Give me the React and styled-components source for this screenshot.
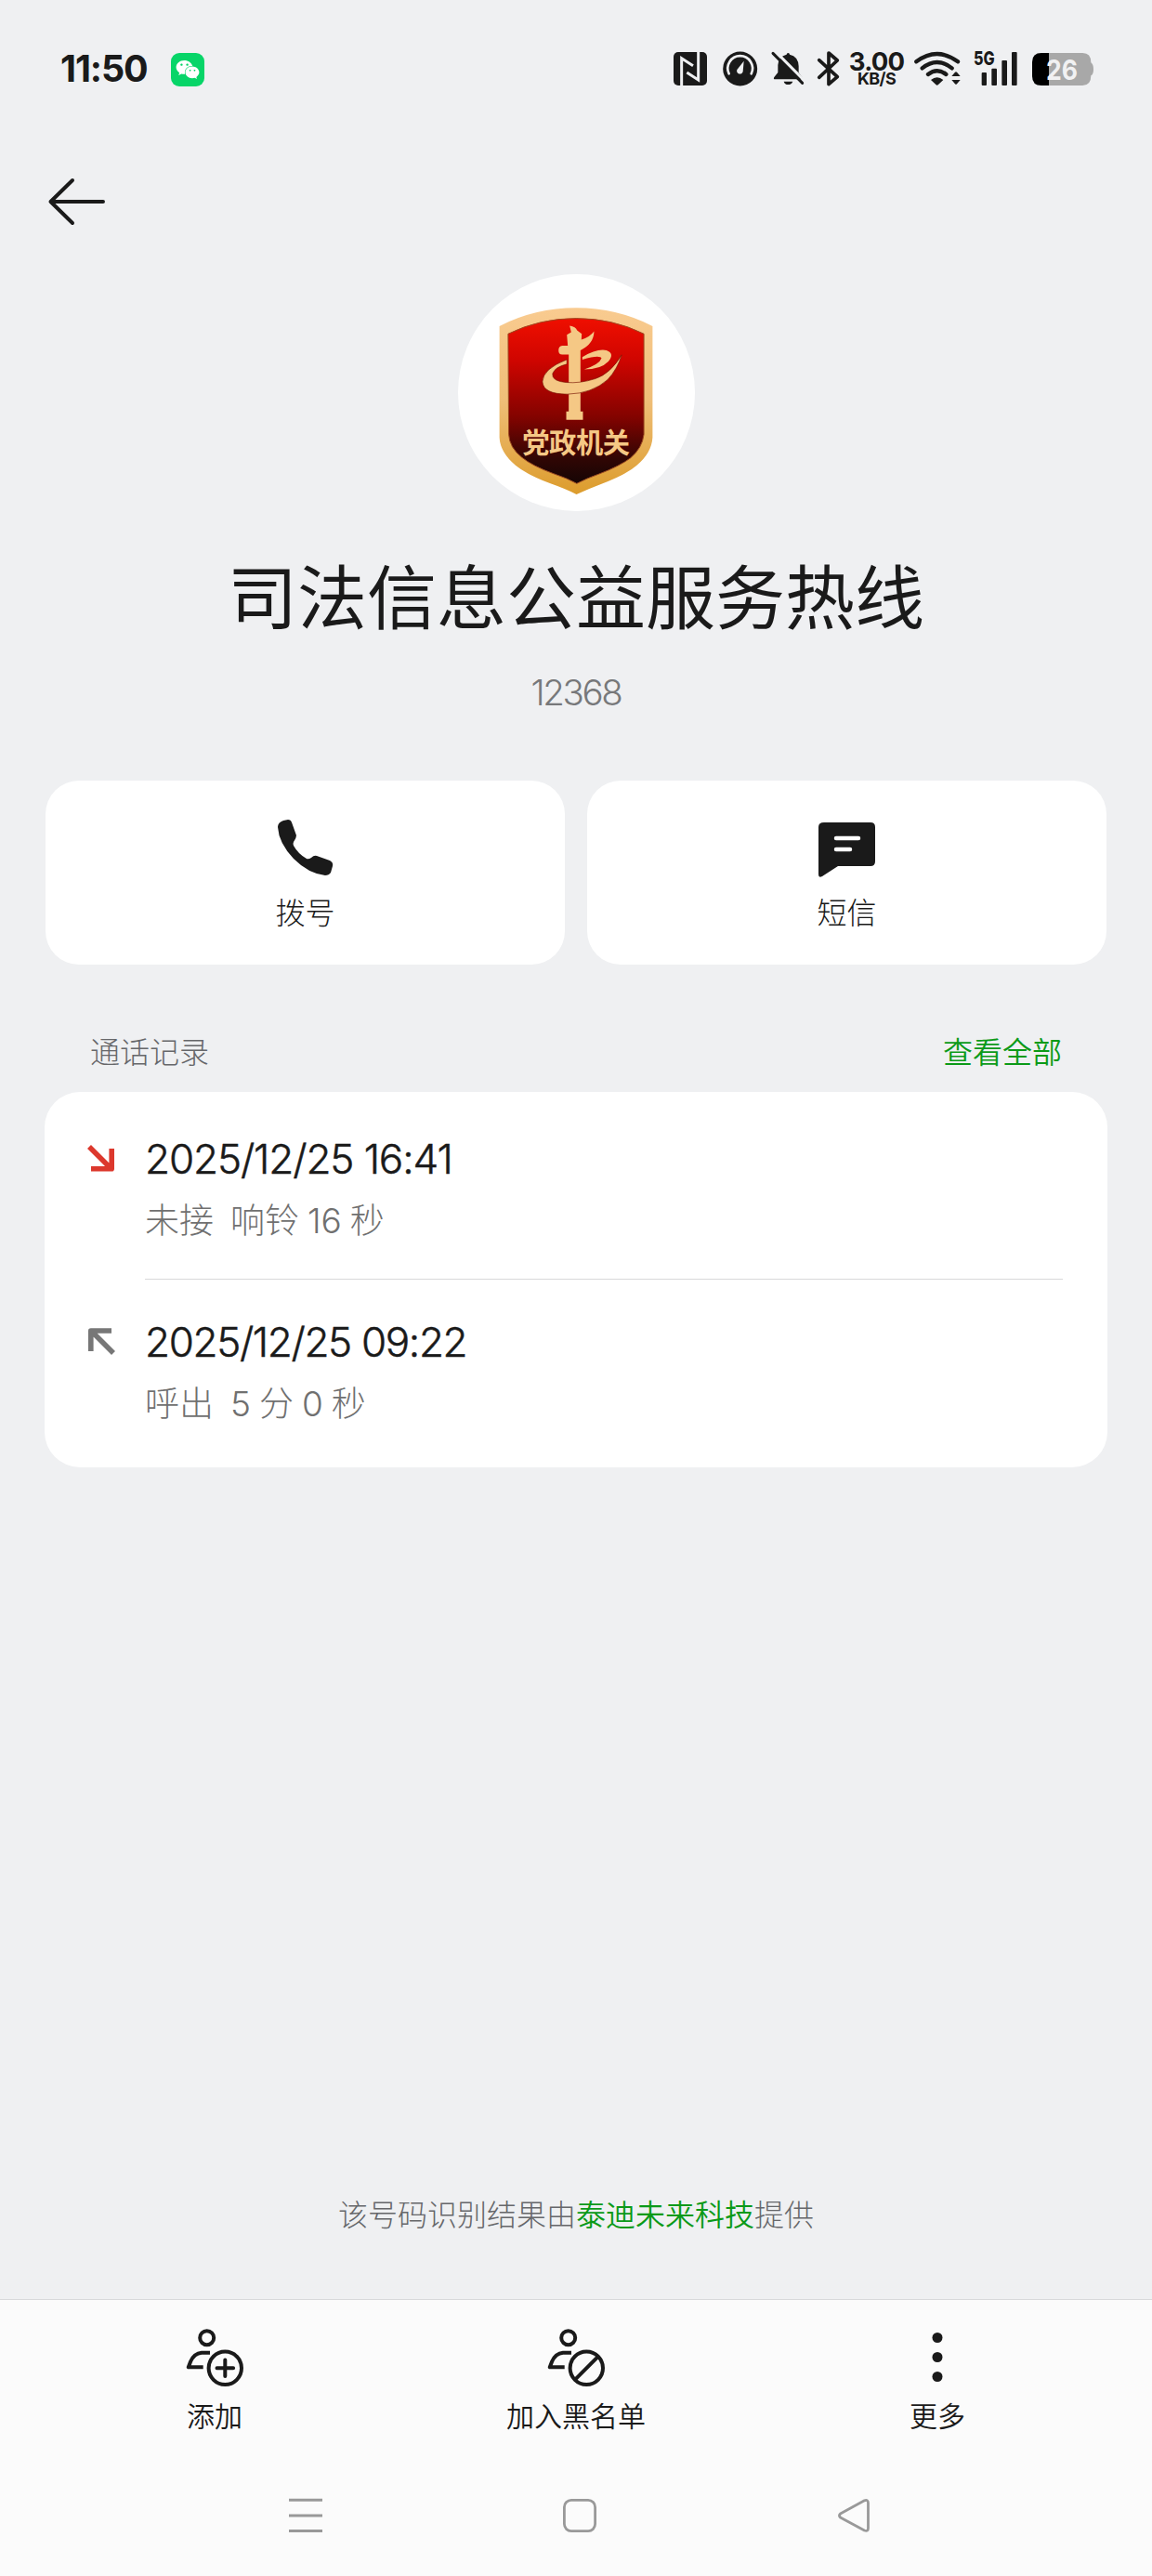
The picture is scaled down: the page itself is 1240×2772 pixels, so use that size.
import React from "react";
import styled, { createGlobalStyle } from "styled-components";
import { FaWeixin } from "react-icons/fa";

const INK = "#1a1a1a";
const PAPER = "#eff0f2";
const GOLD = "#f5c885";

const logs = [
  { missed: true, date: "2025/12/25 16:41", detail: "未接  响铃 16 秒", spacing: "-1.1px" },
  { missed: false, date: "2025/12/25 09:22", detail: "呼出  5 分 0 秒", spacing: "-1.35px" },
];

// 状态栏
const StatusIcon = ({ x, width, children }) => (
  <StatusSvg width={width} height="38" viewBox={`${x} 75 ${width * 3} 114`}>
    {children}
  </StatusSvg>
);

const StatusBar = () => (
  <StatusWrap>
    <Clock>11:50</Clock>
    <WeChat>
      <FaWeixin />
    </WeChat>
    <StatusRight>
      <StatusIcon x={72} width={39}>
        <rect x="75" y="78" width="108" height="108" rx="15" fill={INK} />
        <path d="M101 188V98L138 122M155 76V168L118 144" stroke={PAPER} strokeWidth="9" fill="none" />
      </StatusIcon>
      <StatusIcon x={231} width={39}>
        <circle cx="290" cy="132" r="55.5" fill={INK} />
        <path d="M254 148A40 40 0 1 1 326 148" stroke={PAPER} strokeWidth="8" fill="none" strokeLinecap="round" />
        <path d="M302 107L299 141A10 10 0 1 1 280 135Z" fill={PAPER} />
      </StatusIcon>
      <StatusIcon x={390} width={36}>
        <path
          d="M440 86Q440 81 445 81Q450 81 450 86Q478 92 479 124V144L491 160Q494 166 487 166H403Q396 166 400 159L412 144V120Q414 92 440 86ZM431 173H460Q456 183 445 183Q434 183 431 173Z"
          fill={INK}
        />
        <path d="M404 76L500 173" stroke={PAPER} strokeWidth="9" />
        <path d="M396 82L491 178" stroke={INK} strokeWidth="9" strokeLinecap="round" />
      </StatusIcon>
      <StatusIcon x={540} width={22}>
        <path
          d="M545 104L604 158L576 182V81L604 105L545 160"
          stroke={INK}
          strokeWidth="11"
          fill="none"
          strokeLinejoin="round"
          strokeLinecap="round"
        />
      </StatusIcon>
      <NetSpeed>
        <NetValue>3.00</NetValue>
        <NetUnit>KB/S</NetUnit>
      </NetSpeed>
      <StatusIcon x={855} width={49}>
        <g stroke={INK} strokeWidth="13" fill="none" strokeLinecap="round">
          <path d="M859 109Q926 59 993 109" />
          <path d="M878 130Q926 92 974 130" />
          <path d="M897 150Q926 127 955 150" />
        </g>
        <path d="M906 168Q926 151 946 168L930 183Q926 187 922 183Z" fill={INK} />
        <path d="M973 156L984 143Q987 140 990 143L1001 156ZM973 168H1001L990 181Q987 184 984 181Z" fill={INK} />
      </StatusIcon>
      <StatusIcon x={1044} width={48}>
        <text x="1044" y="121" fontSize="62" fontWeight="800" fill={INK} textLength="68" lengthAdjust="spacingAndGlyphs">
          5G
        </text>
        <rect x="1070" y="144" width="16" height="42" rx="3" fill={INK} />
        <rect x="1102" y="131" width="17" height="55" rx="3" fill={INK} />
        <rect x="1135" y="105" width="17" height="81" rx="3" fill={INK} />
        <rect x="1167" y="78" width="17" height="108" rx="3" fill={INK} />
      </StatusIcon>
      <StatusIcon x={1230} width={67}>
        <path
          d="M1287 81H1396Q1423 81 1423 112Q1431 118 1431 134Q1431 150 1423 154Q1423 186 1396 186H1287Z"
          fill="#a8a8a8"
        />
        <path d="M1287 81H1263Q1233 81 1233 110V156Q1233 186 1263 186H1287Z" fill="#000" />
        <text x="1278" y="167" fontSize="90" fontWeight="700" fill="#f1f1f2" textLength="102" lengthAdjust="spacingAndGlyphs">
          26
        </text>
      </StatusIcon>
    </StatusRight>
  </StatusWrap>
);

// 党政机关徽标
const Emblem = () => (
  <svg width="255" height="255" viewBox="36 44 766 766">
    <defs>
      <linearGradient id="gold" x1="0" y1="0" x2="0" y2="1">
        <stop offset="0" stopColor="#f9cb90" />
        <stop offset="0.5" stopColor="#efbe77" />
        <stop offset="1" stopColor="#dc9c2c" />
      </linearGradient>
      <linearGradient id="red" x1="0" y1="0" x2="0" y2="1">
        <stop offset="0" stopColor="#ef0f00" />
        <stop offset="0.25" stopColor="#d00500" />
        <stop offset="0.6" stopColor="#820300" />
        <stop offset="0.85" stopColor="#300604" />
        <stop offset="1" stopColor="#150505" />
      </linearGradient>
    </defs>
    <path
      d="M170 212Q285 153 418 153Q550 153 665 212V572Q662 622 614 662Q580 692 500 722Q455 739 419 756Q383 738 335 721Q258 692 222 662Q172 620 170 572Z"
      fill="url(#gold)"
    />
    <path
      d="M198 237Q300 187 418 187Q536 187 637 237V562Q632 606 594 638Q560 664 492 690Q450 705 420 721Q390 704 345 689Q276 664 242 636Q202 604 200 562Z"
      fill="url(#red)"
      stroke="#9c4a22"
      strokeWidth="3"
    />
    <g fill={GOLD}>
      <path d="M438 312Q484 284 516 290Q544 300 522 326Q497 352 444 352Q494 335 500 316Q496 303 438 320Z" />
      <path d="M394 488V304H373Q361 304 361 290Q361 276 373 275H391L388 240L402 232L397 211Q417 214 421 226L436 237L435 256Q462 248 476 229Q475 270 432 290V488H440V515H386V488Z" />
      <path
        d="M388 320Q310 350 309 392Q312 432 390 432Q470 430 520 385Q552 350 565 305Q530 365 480 382Q430 398 385 394Q338 390 342 365Q350 344 388 335Z"
        stroke="#7a1a08"
        strokeWidth="2"
      />
      <EmblemText x="244" y="622" textLength="348">
        党政机关
      </EmblemText>
    </g>
  </svg>
);

const PhoneIcon = () => (
  <svg width="60" height="60" viewBox="0 0 60 60">
    <path
      d="M0 8Q0 3 6 1L11 0Q14 0 15 3L20 17Q20 20 17 24Q16 26 17 28Q22 37 31 42Q33 43 36 41Q39 38 42 39L56 44Q60 46 59 50L57 57Q55 60 51 60Q33 58 17 42Q1 25 0 8Z"
      fill={INK}
    />
  </svg>
);

const MessageIcon = () => (
  <svg width="62" height="60" viewBox="0 0 62 60">
    <path d="M6 3H56Q61 3 61 8V45Q61 50 56 50H21L4 61Q0 63 0 59V8Q0 3 6 3Z" fill={INK} />
    <path d="M19 20H43M19 32H34" stroke="#fff" strokeWidth="4.5" strokeLinecap="round" />
  </svg>
);

const MissedIcon = () => (
  <LogSvg width="30" height="30" viewBox="0 0 30 30">
    <path d="M2 2L25 25M4 25.7H26.2V4" stroke="#dc382d" strokeWidth="5.6" fill="none" strokeLinejoin="round" />
  </LogSvg>
);

const OutgoingIcon = () => (
  <LogSvg width="30" height="30" viewBox="0 0 30 30">
    <path d="M28 27L5 4M3.8 25V3H26" stroke="#777" strokeWidth="5.6" fill="none" strokeLinejoin="round" />
  </LogSvg>
);

const Person = ({ children }) => (
  <svg width="62" height="62" viewBox="0 0 62 62" fill="none" stroke={INK} strokeWidth="4">
    <circle cx="22.7" cy="9.7" r="7.5" />
    <path d="M26 25.7H17Q9 26.5 5.2 35L2.8 41.3H18.7" strokeLinejoin="round" />
    <circle cx="42.3" cy="42.3" r="17.7" />
    {children}
  </svg>
);

const App = () => {
  return (
    <Screen>
      <GlobalStyle />
      <StatusBar />
      <Header>
        <svg width="62" height="50" viewBox="0 0 62 50">
          <path
            d="M26 2L2.5 25L26 48M2.5 25H59"
            stroke={INK}
            strokeWidth="4"
            fill="none"
            strokeLinecap="round"
            strokeLinejoin="round"
          />
        </svg>
      </Header>
      <Avatar>
        <Emblem />
      </Avatar>
      <Name>司法信息公益服务热线</Name>
      <PhoneNumber>12368</PhoneNumber>
      <Actions>
        <ActionCard>
          <PhoneIcon />
          <ActionLabel>拨号</ActionLabel>
        </ActionCard>
        <ActionCard>
          <MessageIcon />
          <ActionLabel>短信</ActionLabel>
        </ActionCard>
      </Actions>
      <LogHeader>
        <LogTitle>通话记录</LogTitle>
        <ViewAll>查看全部</ViewAll>
      </LogHeader>
      <LogCard>
        {logs.map(log => (
          <LogRow key={log.date}>
            {log.missed ? <MissedIcon /> : <OutgoingIcon />}
            <LogBody>
              <LogDate $spacing={log.spacing}>{log.date}</LogDate>
              <LogDetail>{log.detail}</LogDetail>
            </LogBody>
          </LogRow>
        ))}
      </LogCard>
      <Provider>
        该号码识别结果由<ProviderName>泰迪未来科技</ProviderName>提供
      </Provider>
      <BottomBar>
        <Tools>
          <Tool>
            <Person>
              <path d="M42.3 33.5V51.1M33.5 42.3H51.1" strokeLinecap="round" />
            </Person>
            <ToolLabel>添加</ToolLabel>
          </Tool>
          <Tool>
            <Person>
              <path d="M54.8 29.8L29.8 54.8" />
            </Person>
            <ToolLabel>加入黑名单</ToolLabel>
          </Tool>
          <Tool>
            <svg width="12" height="62" viewBox="0 0 12 62" fill={INK}>
              <circle cx="6" cy="9.5" r="5.5" />
              <circle cx="6" cy="30.5" r="5.5" />
              <circle cx="6" cy="51.5" r="5.5" />
            </svg>
            <ToolLabel>更多</ToolLabel>
          </Tool>
        </Tools>
        <SystemNav>
          <svg width="36" height="40" viewBox="0 0 36 40">
            <path d="M0 4.3H36M0 21H36M0 37.5H36" stroke="#999" strokeWidth="3" />
          </svg>
          <svg width="36" height="40" viewBox="0 0 36 40">
            <rect x="1.4" y="4.4" width="33.2" height="33.2" rx="7.5" stroke="#999" strokeWidth="2.8" fill="none" />
          </svg>
          <svg width="36" height="40" viewBox="0 0 36 40">
            <path
              d="M3.5 19L29.5 4.8Q33.5 3.5 33.5 7.5V34.5Q33.5 38.5 29.5 37L3.5 23Q1.5 21 3.5 19Z"
              stroke="#999"
              strokeWidth="2.8"
              fill="none"
              strokeLinejoin="round"
            />
          </svg>
        </SystemNav>
      </BottomBar>
    </Screen>
  );
};

const GlobalStyle = createGlobalStyle`
  body {
    margin: 0;
    background: ${PAPER};
  }
  svg {
    display: block;
    flex-shrink: 0;
    overflow: visible;
  }
`;

const Screen = styled.div`
  display: flex;
  flex-direction: column;
  width: 1240px;
  height: 2772px;
  box-sizing: border-box;
  background: ${PAPER};
  color: ${INK};
  font-family: Inter, "Noto Sans CJK SC", sans-serif;
`;
const StatusWrap = styled.div`
  display: flex;
  align-items: center;
  height: 149px;
  padding: 0 63px 0 65px;
`;
const Clock = styled.div`
  width: 119px;
  font-size: 39.5px;
  line-height: 44px;
  margin-top: -2px;
  font-weight: 700;
  letter-spacing: -1.1px;
`;
const WeChat = styled.div`
  display: flex;
  align-items: center;
  justify-content: center;
  width: 36px;
  height: 36px;
  border-radius: 9px;
  background: #07d568;
  color: #fff;
  font-size: 26px;
`;
const StatusRight = styled.div`
  display: flex;
  align-items: center;
  gap: 14px;
  margin-left: auto;
`;
const StatusSvg = styled.svg`
  position: relative;
  margin-top: -1px;
`;
const NetSpeed = styled.div`
  display: flex;
  flex-direction: column;
  align-items: center;
  width: 55px;
  font-weight: 700;
  white-space: nowrap;
`;
const NetValue = styled.div`
  font-size: 27.5px;
  line-height: 20px;
  letter-spacing: -0.8px;
`;
const NetUnit = styled.div`
  font-size: 18px;
  line-height: 17px;
  letter-spacing: -0.6px;
`;
const Header = styled.div`
  display: flex;
  align-items: center;
  height: 135px;
  padding-left: 52px;
`;
const Avatar = styled.div`
  align-self: center;
  width: 255px;
  height: 255px;
  margin-top: 11px;
  border-radius: 50%;
  background: #fff;
  overflow: hidden;
`;
const EmblemText = styled.text`
  font-size: 88px;
  font-weight: 700;
`;
const Name = styled.div`
  margin-top: 49px;
  font-size: 75px;
  line-height: 90px;
  text-align: center;
  font-weight: 400;
`;
const PhoneNumber = styled.div`
  margin-top: 34px;
  font-size: 38.5px;
  line-height: 44px;
  letter-spacing: -2.4px;
  text-align: center;
  font-weight: 300;
  color: #77787a;
`;
const Actions = styled.div`
  display: flex;
  gap: 24px;
  margin: 73px 49px 0;
`;
const ActionCard = styled.div`
  flex: 1;
  display: flex;
  flex-direction: column;
  align-items: center;
  height: 198px;
  padding-top: 42px;
  box-sizing: border-box;
  border-radius: 36px;
  background: #fff;
`;
const ActionLabel = styled.div`
  margin-top: 21px;
  font-size: 32px;
  line-height: 40px;
  font-weight: 300;
`;
const LogHeader = styled.div`
  display: flex;
  justify-content: space-between;
  margin: 73px 97px 0;
  font-size: 32px;
  line-height: 44px;
`;
const LogTitle = styled.div`
  font-weight: 300;
  color: #66676a;
`;
const ViewAll = styled.div`
  color: #0b9a18;
  font-weight: 350;
`;
const LogCard = styled.div`
  margin: 20px 48px 0;
  padding: 5px 0;
  border-radius: 38px;
  background: #fff;
`;
const LogRow = styled.div`
  display: flex;
  padding: 0 48px 0 46px;
`;
const LogSvg = styled.svg`
  margin: 52px 32px 0 0;
`;
const LogBody = styled.div`
  flex: 1;
  padding: 39px 0 37px;
  ${LogRow}:not(:last-child) & {
    border-bottom: 1px solid #d9d9da;
  }
  ${LogRow}:last-child & {
    padding-bottom: 38px;
  }
`;
const LogDate = styled.div`
  font-size: 44px;
  line-height: 56px;
  font-weight: 300;
  -webkit-text-stroke: 0.5px ${INK};
  letter-spacing: ${props => props.$spacing};
  white-space: nowrap;
`;
const LogDetail = styled.div`
  margin-top: 14px;
  font-size: 37px;
  line-height: 50px;
  font-weight: 270;
  white-space: pre;
  word-spacing: -1.4px;
  color: #707070;
`;
const Provider = styled.div`
  margin: auto 0 68px;
  font-size: 32px;
  line-height: 44px;
  text-align: center;
  font-weight: 300;
  color: #66676a;
`;
const ProviderName = styled.span`
  font-weight: 350;
  color: #0b9a18;
`;
const BottomBar = styled.div`
  display: flex;
  flex-direction: column;
  height: 298px;
  box-sizing: border-box;
  border-top: 1px solid #d8d9db;
  background: #fbfbfb;
`;
const Tools = styled.div`
  display: grid;
  grid-template-columns: repeat(3, 389px);
  justify-content: center;
  padding-top: 31px;
`;
const Tool = styled.div`
  display: flex;
  flex-direction: column;
  align-items: center;
`;
const ToolLabel = styled.div`
  margin-top: 12px;
  font-size: 30px;
  line-height: 40px;
  font-weight: 350;
`;
const SystemNav = styled.div`
  display: grid;
  grid-template-columns: repeat(3, 295px);
  justify-items: center;
  margin: 66px 0 0 181px;
`;

export default App;
